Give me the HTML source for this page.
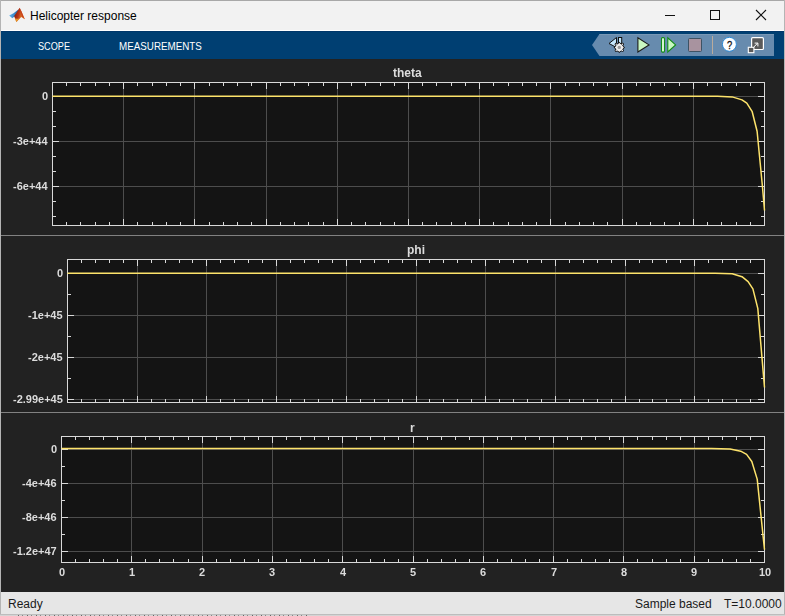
<!DOCTYPE html>
<html><head><meta charset="utf-8"><style>
*{margin:0;padding:0;box-sizing:border-box}
html,body{width:785px;height:616px;overflow:hidden;background:#3a3a3a}
body{position:relative;font-family:"Liberation Sans",sans-serif;-webkit-font-smoothing:antialiased}
.abs{position:absolute}
.yl,.xl,.ttl{will-change:transform}
.yl{position:absolute;font-size:11px;font-weight:bold;color:#dcdcdc;line-height:14px;white-space:nowrap;text-align:right}
.xl{position:absolute;width:40px;text-align:center;font-size:11px;font-weight:bold;color:#dcdcdc;line-height:14px}
.ttl{position:absolute;font-size:12px;font-weight:bold;color:#dcdcdc;line-height:14px;white-space:nowrap}
.mn{position:absolute;font-size:11.5px;color:#fff;line-height:14px;white-space:nowrap;transform-origin:0 0}
.st{position:absolute;font-size:12px;color:#1a1a1a;line-height:16px;white-space:nowrap}
</style></head><body>
<div class="abs" style="left:0;top:0;width:785px;height:1px;background:#a8a8a8"></div>
<div class="abs" style="left:0;top:0;width:1px;height:616px;background:#b4b4b4"></div>
<div class="abs" style="left:784px;top:0;width:1px;height:616px;background:#b4b4b4"></div>
<div class="abs" style="left:1px;top:1px;width:783px;height:29px;background:#f2f2f2"></div>
<div class="abs" style="left:1px;top:30px;width:783px;height:1px;background:#ffffff"></div>
<div class="abs" style="left:1px;top:31px;width:783px;height:28px;background:#003f72"></div>
<div class="abs" style="left:1px;top:31px;width:783px;height:1px;background:#00376a"></div>
<div class="abs" style="left:1px;top:59px;width:783px;height:533px;background:#222222"></div>
<div class="abs" style="left:1px;top:592px;width:783px;height:23px;background:#e6e6e6"></div>
<div class="abs" style="left:0px;top:614px;width:785px;height:1px;background:#bdbdbd"></div>
<div class="abs" style="left:0px;top:615px;width:785px;height:1px;background:#d4d4d4"></div>
<div class="abs" style="left:18px;top:615px;width:292px;height:1px;background:repeating-linear-gradient(90deg,#666 0 1px,#d4d4d4 1px 4px,#888 4px 5px,#d4d4d4 5px 9px)"></div>
<div class="abs" style="left:1px;top:235px;width:783px;height:1px;background:#828282"></div>
<div class="abs" style="left:1px;top:412px;width:783px;height:1px;background:#828282"></div>
<div class="st" style="left:30px;top:8px;color:#000">Helicopter response</div>
<div class="mn" style="left:38px;top:39px;transform:scaleX(0.795)">SCOPE</div>
<div class="mn" style="left:119px;top:39px;transform:scaleX(0.853)">MEASUREMENTS</div>
<div class="st" style="left:8px;top:596px">Ready</div>
<div class="st" style="left:635px;top:596px">Sample based</div>
<div class="st" style="left:724px;top:596px">T=10.0000</div>
<svg class="abs" style="left:0;top:0" width="785" height="616" shape-rendering="crispEdges">
<rect x="52" y="82" width="713" height="144" fill="#141414"/>
<path d="M123.5 82V225M194.5 82V225M266.5 82V225M337.5 82V225M408.5 82V225M479.5 82V225M550.5 82V225M622.5 82V225M693.5 82V225M52 96.5H764M52 141.5H764M52 186.5H764" stroke="#4d4d4d"/>
<path d="M52.5 82v7M52.5 219V226M66.5 82v4M66.5 222V226M80.5 82v4M80.5 222V226M95.5 82v4M95.5 222V226M109.5 82v4M109.5 222V226M123.5 82v7M123.5 219V226M137.5 82v4M137.5 222V226M152.5 82v4M152.5 222V226M166.5 82v4M166.5 222V226M180.5 82v4M180.5 222V226M194.5 82v7M194.5 219V226M209.5 82v4M209.5 222V226M223.5 82v4M223.5 222V226M237.5 82v4M237.5 222V226M251.5 82v4M251.5 222V226M266.5 82v7M266.5 219V226M280.5 82v4M280.5 222V226M294.5 82v4M294.5 222V226M308.5 82v4M308.5 222V226M323.5 82v4M323.5 222V226M337.5 82v7M337.5 219V226M351.5 82v4M351.5 222V226M365.5 82v4M365.5 222V226M380.5 82v4M380.5 222V226M394.5 82v4M394.5 222V226M408.5 82v7M408.5 219V226M422.5 82v4M422.5 222V226M436.5 82v4M436.5 222V226M451.5 82v4M451.5 222V226M465.5 82v4M465.5 222V226M479.5 82v7M479.5 219V226M493.5 82v4M493.5 222V226M508.5 82v4M508.5 222V226M522.5 82v4M522.5 222V226M536.5 82v4M536.5 222V226M550.5 82v7M550.5 219V226M565.5 82v4M565.5 222V226M579.5 82v4M579.5 222V226M593.5 82v4M593.5 222V226M607.5 82v4M607.5 222V226M622.5 82v7M622.5 219V226M636.5 82v4M636.5 222V226M650.5 82v4M650.5 222V226M664.5 82v4M664.5 222V226M679.5 82v4M679.5 222V226M693.5 82v7M693.5 219V226M707.5 82v4M707.5 222V226M721.5 82v4M721.5 222V226M736.5 82v4M736.5 222V226M750.5 82v4M750.5 222V226M764.5 82v7M764.5 219V226M52 216.5h4M761 216.5H765M52 201.5h4M761 201.5H765M52 186.5h4M761 186.5H765M52 171.5h4M761 171.5H765M52 156.5h4M761 156.5H765M52 141.5h4M761 141.5H765M52 126.5h4M761 126.5H765M52 111.5h4M761 111.5H765M52 96.5h4M761 96.5H765M52 96.5h7M758 96.5H765M52 141.5h7M758 141.5H765M52 186.5h7M758 186.5H765" stroke="#d9d9d9"/>
<rect x="52.5" y="82.5" width="712" height="143" fill="none" stroke="#d9d9d9"/>
<polyline points="52.5,96.2 717.5,96.2 732.2,96.9 742.0,99.9 746.8,103.2 752.2,111.7 757.1,131.2 762.4,186 764.5,210.5" fill="none" stroke="#fde36b" stroke-width="1.5" stroke-linejoin="round" shape-rendering="geometricPrecision"/>
<rect x="67" y="259" width="698" height="144" fill="#141414"/>
<path d="M137.5 259V402M206.5 259V402M276.5 259V402M346.5 259V402M416.5 259V402M485.5 259V402M555.5 259V402M625.5 259V402M694.5 259V402M67 273.5H764M67 315.5H764M67 357.5H764M67 399.5H764" stroke="#4d4d4d"/>
<path d="M67.5 259v7M67.5 396V403M81.5 259v4M81.5 399V403M95.5 259v4M95.5 399V403M109.5 259v4M109.5 399V403M123.5 259v4M123.5 399V403M137.5 259v7M137.5 396V403M151.5 259v4M151.5 399V403M165.5 259v4M165.5 399V403M179.5 259v4M179.5 399V403M192.5 259v4M192.5 399V403M206.5 259v7M206.5 396V403M220.5 259v4M220.5 399V403M234.5 259v4M234.5 399V403M248.5 259v4M248.5 399V403M262.5 259v4M262.5 399V403M276.5 259v7M276.5 396V403M290.5 259v4M290.5 399V403M304.5 259v4M304.5 399V403M318.5 259v4M318.5 399V403M332.5 259v4M332.5 399V403M346.5 259v7M346.5 396V403M360.5 259v4M360.5 399V403M374.5 259v4M374.5 399V403M388.5 259v4M388.5 399V403M402.5 259v4M402.5 399V403M416.5 259v7M416.5 396V403M429.5 259v4M429.5 399V403M443.5 259v4M443.5 399V403M457.5 259v4M457.5 399V403M471.5 259v4M471.5 399V403M485.5 259v7M485.5 396V403M499.5 259v4M499.5 399V403M513.5 259v4M513.5 399V403M527.5 259v4M527.5 399V403M541.5 259v4M541.5 399V403M555.5 259v7M555.5 396V403M569.5 259v4M569.5 399V403M583.5 259v4M583.5 399V403M597.5 259v4M597.5 399V403M611.5 259v4M611.5 399V403M625.5 259v7M625.5 396V403M639.5 259v4M639.5 399V403M652.5 259v4M652.5 399V403M666.5 259v4M666.5 399V403M680.5 259v4M680.5 399V403M694.5 259v7M694.5 396V403M708.5 259v4M708.5 399V403M722.5 259v4M722.5 399V403M736.5 259v4M736.5 399V403M750.5 259v4M750.5 399V403M764.5 259v7M764.5 396V403M67 399.5h4M761 399.5H765M67 378.5h4M761 378.5H765M67 357.5h4M761 357.5H765M67 336.5h4M761 336.5H765M67 315.5h4M761 315.5H765M67 294.5h4M761 294.5H765M67 273.5h4M761 273.5H765M67 273.5h7M758 273.5H765M67 315.5h7M758 315.5H765M67 357.5h7M758 357.5H765M67 399.5h7M758 399.5H765" stroke="#d9d9d9"/>
<rect x="67.5" y="259.5" width="697" height="143" fill="none" stroke="#d9d9d9"/>
<polyline points="67.5,273.2 715.1,273.2 732.2,273.8 742.0,276.7 748.1,281.6 752.9,288.9 757.8,308.4 764.5,387.5" fill="none" stroke="#fde36b" stroke-width="1.5" stroke-linejoin="round" shape-rendering="geometricPrecision"/>
<rect x="61" y="436" width="704" height="127" fill="#141414"/>
<path d="M131.5 436V562M202.5 436V562M272.5 436V562M342.5 436V562M413.5 436V562M483.5 436V562M553.5 436V562M623.5 436V562M694.5 436V562M61 449.5H764M61 483.5H764M61 517.5H764M61 551.5H764" stroke="#4d4d4d"/>
<path d="M61.5 436v7M61.5 556V563M75.5 436v4M75.5 559V563M89.5 436v4M89.5 559V563M103.5 436v4M103.5 559V563M117.5 436v4M117.5 559V563M131.5 436v7M131.5 556V563M145.5 436v4M145.5 559V563M159.5 436v4M159.5 559V563M173.5 436v4M173.5 559V563M188.5 436v4M188.5 559V563M202.5 436v7M202.5 556V563M216.5 436v4M216.5 559V563M230.5 436v4M230.5 559V563M244.5 436v4M244.5 559V563M258.5 436v4M258.5 559V563M272.5 436v7M272.5 556V563M286.5 436v4M286.5 559V563M300.5 436v4M300.5 559V563M314.5 436v4M314.5 559V563M328.5 436v4M328.5 559V563M342.5 436v7M342.5 556V563M356.5 436v4M356.5 559V563M370.5 436v4M370.5 559V563M384.5 436v4M384.5 559V563M398.5 436v4M398.5 559V563M413.5 436v7M413.5 556V563M427.5 436v4M427.5 559V563M441.5 436v4M441.5 559V563M455.5 436v4M455.5 559V563M469.5 436v4M469.5 559V563M483.5 436v7M483.5 556V563M497.5 436v4M497.5 559V563M511.5 436v4M511.5 559V563M525.5 436v4M525.5 559V563M539.5 436v4M539.5 559V563M553.5 436v7M553.5 556V563M567.5 436v4M567.5 559V563M581.5 436v4M581.5 559V563M595.5 436v4M595.5 559V563M609.5 436v4M609.5 559V563M623.5 436v7M623.5 556V563M637.5 436v4M637.5 559V563M652.5 436v4M652.5 559V563M666.5 436v4M666.5 559V563M680.5 436v4M680.5 559V563M694.5 436v7M694.5 556V563M708.5 436v4M708.5 559V563M722.5 436v4M722.5 559V563M736.5 436v4M736.5 559V563M750.5 436v4M750.5 559V563M764.5 436v7M764.5 556V563M61 551.5h4M761 551.5H765M61 534.5h4M761 534.5H765M61 517.5h4M761 517.5H765M61 500.5h4M761 500.5H765M61 483.5h4M761 483.5H765M61 466.5h4M761 466.5H765M61 449.5h4M761 449.5H765M61 449.5h7M758 449.5H765M61 483.5h7M758 483.5H765M61 517.5h7M758 517.5H765M61 551.5h7M758 551.5H765" stroke="#d9d9d9"/>
<rect x="61.5" y="436.5" width="703" height="126" fill="none" stroke="#d9d9d9"/>
<polyline points="61.5,448.5 711.5,448.5 730.1,448.9 740.7,451.2 746.6,454.4 751.8,461.5 757.2,479.1 764.5,549.7" fill="none" stroke="#fde36b" stroke-width="1.5" stroke-linejoin="round" shape-rendering="geometricPrecision"/>
</svg>

<svg class="abs" style="left:0;top:0" width="785" height="60">
 <defs>
  <linearGradient id="mg" x1="0" y1="0.2" x2="0.9" y2="0.5">
   <stop offset="0" stop-color="#7a1a0c"/><stop offset="0.5" stop-color="#b83416"/><stop offset="1" stop-color="#f29a2e"/>
  </linearGradient>
  <linearGradient id="mb" x1="0" y1="0" x2="1" y2="0">
   <stop offset="0" stop-color="#5fb2ea"/><stop offset="1" stop-color="#1e64a8"/>
  </linearGradient>
 </defs>
 <!-- matlab logo -->
 <polygon points="9.2,15.6 13.5,13.2 18.8,9.2 17,14.5 12.3,18.2" fill="url(#mb)"/>
 <polygon points="13.2,16.6 15.5,14.8 17.5,12.5 18.5,10 16.4,16" fill="#2a4f8a" opacity="0.8"/>
 <polygon points="14.2,16.2 19.6,7.8 21.5,11.5 24.8,19.3 21.2,17 16.4,22" fill="url(#mg)"/>
 <polygon points="19.6,7.8 21.5,11.5 24.8,19.3 21.8,16.8 20.8,12" fill="#c8401e"/>
 <polygon points="14.8,18.5 17.5,18.8 19.5,18.6 16.4,22" fill="#f0a82a" opacity="0.85"/>
 <!-- window controls -->
 <line x1="665" y1="15.5" x2="675" y2="15.5" stroke="#111" stroke-width="1"/>
 <rect x="710.5" y="10.5" width="9" height="9" fill="none" stroke="#111" stroke-width="1"/>
 <path d="M756,10 L766,20 M766,10 L756,20" stroke="#111" stroke-width="1.1" fill="none"/>
 <!-- toolstrip panel -->
 <polygon points="592,45 599.5,34 774,34 774,56 599.5,56" fill="#678bae"/>
 <line x1="599.5" y1="34.5" x2="774" y2="34.5" stroke="#7898b6"/>
 <!-- step back -->
 <polygon points="609,43.5 616.5,37.5 616.5,47.5" fill="#c4e6fc" stroke="#111" stroke-width="1" stroke-linejoin="miter"/>
 <rect x="618.5" y="37.5" width="3.2" height="6" fill="#c4e6fc" stroke="#111" stroke-width="1"/>
 <g transform="translate(619.3,47.4)">
  <g fill="#111">
   <path d="M0,-5.7 Q2.6,-2.6 5.7,0 Q2.6,2.6 0,5.7 Q-2.6,2.6 -5.7,0 Q-2.6,-2.6 0,-5.7Z"/>
   <circle r="4.3"/>
   <circle cx="3.2" cy="-3.2" r="1.35"/><circle cx="-3.2" cy="3.2" r="1.35"/><circle cx="-3.2" cy="-3.2" r="1.35"/><circle cx="3.2" cy="3.2" r="1.35"/>
  </g>
  <g fill="#ececec">
   <path d="M0,-4.6 Q2.1,-2.1 4.6,0 Q2.1,2.1 0,4.6 Q-2.1,2.1 -4.6,0 Q-2.1,-2.1 0,-4.6Z"/>
   <circle r="3.5"/>
   <circle cx="3.1" cy="-3.1" r="0.7"/><circle cx="-3.1" cy="3.1" r="0.7"/><circle cx="-3.1" cy="-3.1" r="0.7"/><circle cx="3.1" cy="3.1" r="0.7"/>
  </g>
  <circle r="1.7" fill="#9a9a9a"/>
 </g>
 <!-- play -->
 <polygon points="637.9,37.8 637.9,52 649,44.9" fill="#c9f7c1" stroke="#1a1a1a" stroke-width="1.1"/>
 <!-- step fwd -->
 <rect x="661.5" y="37.6" width="3" height="14.5" rx="1" fill="#e2fbdc" stroke="#128c18" stroke-width="1.1"/>
 <polygon points="667.8,37.8 667.8,52 675.6,44.9" fill="#c9f7c1" stroke="#128c18" stroke-width="1.1"/>
 <!-- stop -->
 <rect x="688.5" y="38.5" width="13" height="13" rx="1" fill="#a8939f" stroke="#3e5264" stroke-width="1"/>
 <!-- separator -->
 <line x1="712.5" y1="36" x2="712.5" y2="54" stroke="#b9ab9c"/>
 <!-- help -->
 <circle cx="729.4" cy="44.3" r="7" fill="#fff" stroke="#2c8ad6" stroke-width="1"/>
 <text x="729.5" y="48.6" font-family="Liberation Sans" font-size="11" text-anchor="middle" fill="#111" stroke="#111" stroke-width="0.3" transform="translate(729.5,0) scale(0.85,1) translate(-729.5,0)">?</text>
 <!-- undock -->
 <rect x="751.6" y="37.7" width="11.8" height="11.8" rx="1" fill="#5a5a5a" stroke="#fff" stroke-width="1.2"/>
 <rect x="748.3" y="47.3" width="5.6" height="5.4" fill="#5a5a5a" stroke="#fff" stroke-width="1.1"/>
 <path d="M753.9,46.9 L757.5,43.3 M754.6,43.1 L757.9,43.1 L757.9,46.4" stroke="#fff" stroke-width="1" fill="none"/>
</svg>

<div class="ttl" style="left:393px;top:66px">theta</div>
<div class="ttl" style="left:407px;top:243px">phi</div>
<div class="ttl" style="left:410px;top:421px">r</div>
<div class="yl" style="right:737px;top:89px">0</div><div class="yl" style="right:737px;top:134px">-3e+44</div><div class="yl" style="right:737px;top:179px">-6e+44</div><div class="yl" style="right:722px;top:266px">0</div><div class="yl" style="right:722px;top:308px">-1e+45</div><div class="yl" style="right:722px;top:350px">-2e+45</div><div class="yl" style="right:722px;top:392px">-2.99e+45</div><div class="yl" style="right:728px;top:442px">0</div><div class="yl" style="right:728px;top:476px">-4e+46</div><div class="yl" style="right:728px;top:510px">-8e+46</div><div class="yl" style="right:728px;top:544px">-1.2e+47</div>
<div class="xl" style="left:41.5px;top:565px">0</div><div class="xl" style="left:111.8px;top:565px">1</div><div class="xl" style="left:182.1px;top:565px">2</div><div class="xl" style="left:252.4px;top:565px">3</div><div class="xl" style="left:322.7px;top:565px">4</div><div class="xl" style="left:393.0px;top:565px">5</div><div class="xl" style="left:463.3px;top:565px">6</div><div class="xl" style="left:533.6px;top:565px">7</div><div class="xl" style="left:603.9px;top:565px">8</div><div class="xl" style="left:674.2px;top:565px">9</div><div class="xl" style="left:744.5px;top:565px">10</div>
</body></html>
